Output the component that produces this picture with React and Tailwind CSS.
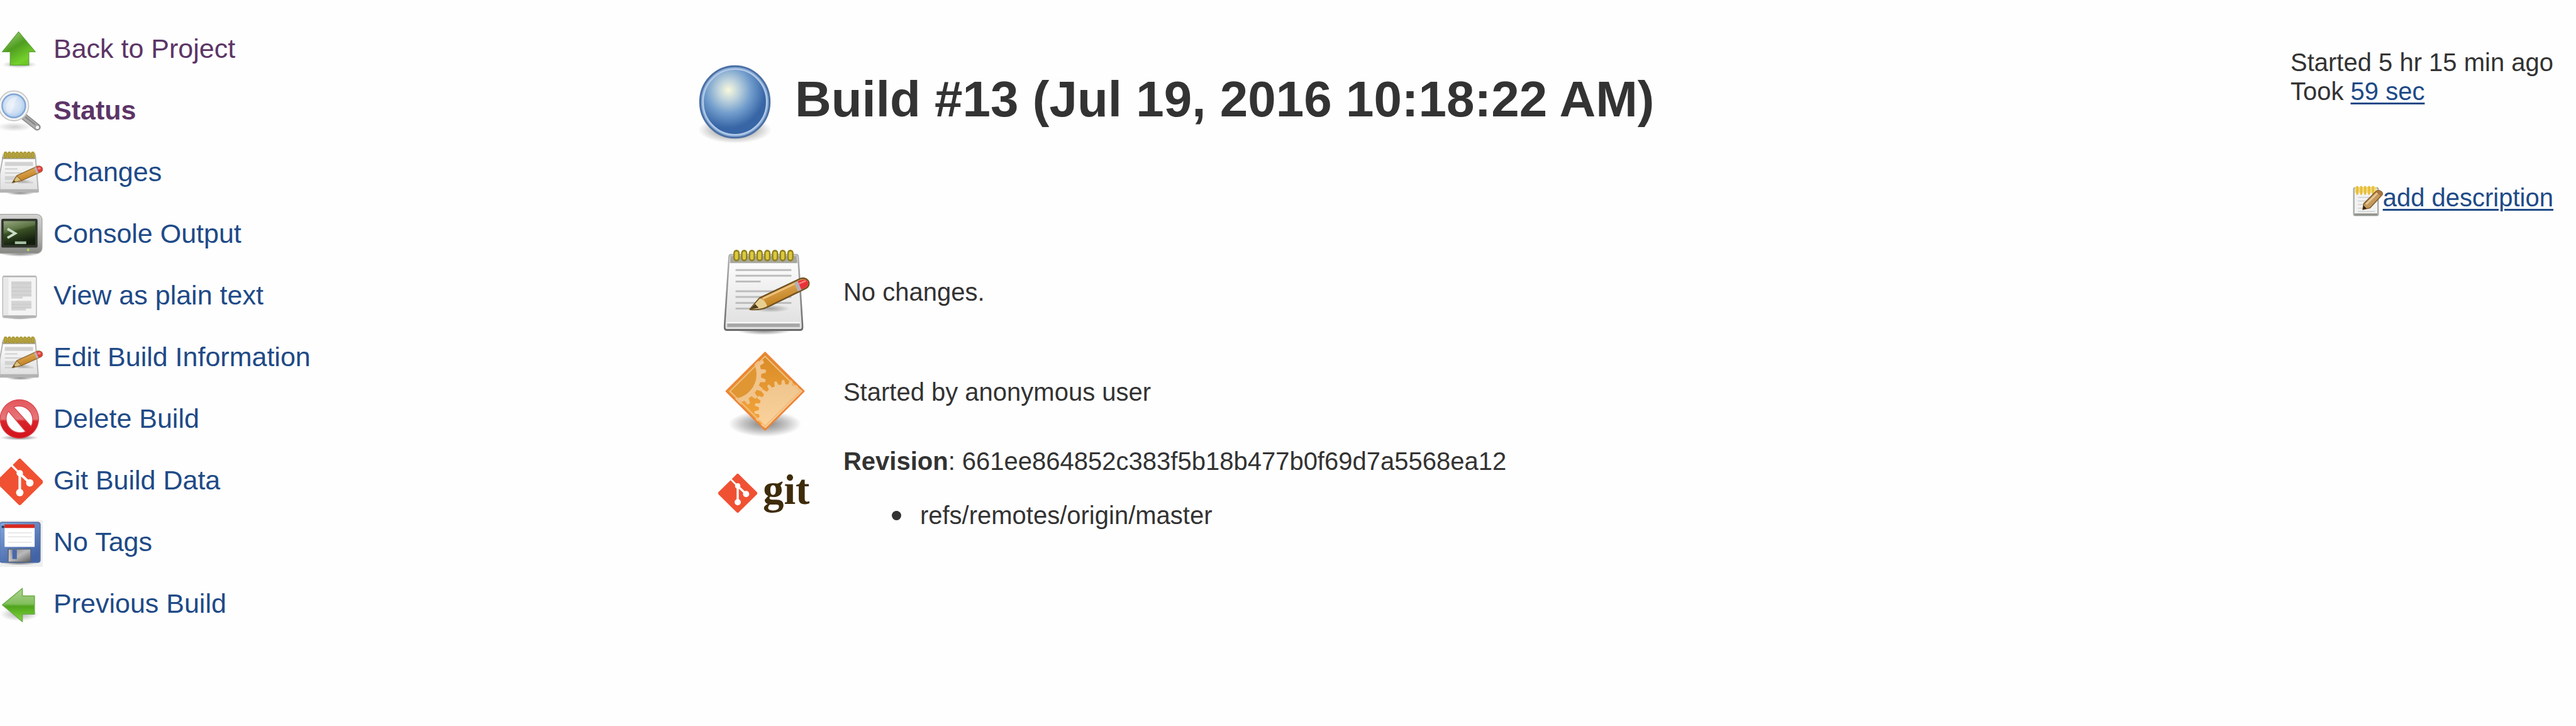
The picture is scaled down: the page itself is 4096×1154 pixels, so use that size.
const ICON = "block h-[74px] w-[68px] shrink-0";

function SharedPaint() {
  return (
    <svg className="absolute size-0" aria-hidden="true">
      <defs>
        <linearGradient id="arrowUp" x1="0" y1="0" x2="0.6" y2="1">
          <stop offset="0" stopColor="#8cc861" />
          <stop offset="0.25" stopColor="#7fbb55" />
          <stop offset="0.5" stopColor="#4f9d20" />
          <stop offset="0.9" stopColor="#74d02b" />
          <stop offset="1" stopColor="#6cc726" />
        </linearGradient>
        <linearGradient id="arrowLeft" x1="0" y1="0" x2="0" y2="1">
          <stop offset="0" stopColor="#aed495" />
          <stop offset="0.46" stopColor="#83bf5c" />
          <stop offset="0.54" stopColor="#4fa41c" />
          <stop offset="1" stopColor="#83d83c" />
        </linearGradient>
        <linearGradient id="paper" x1="0" y1="0" x2="0" y2="1">
          <stop offset="0" stopColor="#ffffff" />
          <stop offset="1" stopColor="#dedede" />
        </linearGradient>
        <linearGradient id="padEdge" x1="0" y1="0" x2="0" y2="1">
          <stop offset="0" stopColor="#b4b4b4" />
          <stop offset="1" stopColor="#6a6a6a" />
        </linearGradient>
        <linearGradient id="wood" x1="0" y1="0" x2="0.5" y2="1">
          <stop offset="0.2" stopColor="#e6b468" />
          <stop offset="0.8" stopColor="#c58424" />
        </linearGradient>
        <radialGradient id="lens" cx="0.45" cy="0.45" r="0.6">
          <stop offset="0" stopColor="#e6eefa" />
          <stop offset="0.6" stopColor="#cfdff3" />
          <stop offset="1" stopColor="#a3c3e8" />
        </radialGradient>
        <linearGradient id="bezel" x1="0" y1="0" x2="0" y2="1">
          <stop offset="0" stopColor="#d4d4d2" />
          <stop offset="0.7" stopColor="#a5a6a1" />
          <stop offset="1" stopColor="#858682" />
        </linearGradient>
        <linearGradient id="screen" x1="0" y1="0" x2="0.35" y2="1">
          <stop offset="0" stopColor="#99a983" />
          <stop offset="0.42" stopColor="#5c7443" />
          <stop offset="0.5" stopColor="#3b5226" />
          <stop offset="1" stopColor="#121d0c" />
        </linearGradient>
        <linearGradient id="forbid" x1="0" y1="0" x2="0" y2="1">
          <stop offset="0" stopColor="#e4575c" />
          <stop offset="0.5" stopColor="#e6777b" />
          <stop offset="0.56" stopColor="#d8232a" />
          <stop offset="1" stopColor="#d3131b" />
        </linearGradient>
        <linearGradient id="floppy" x1="0" y1="0" x2="0.6" y2="1">
          <stop offset="0" stopColor="#84a7dc" />
          <stop offset="1" stopColor="#4263a5" />
        </linearGradient>
        <linearGradient id="shutter" x1="0" y1="0" x2="1" y2="1">
          <stop offset="0" stopColor="#8f8f8f" />
          <stop offset="0.5" stopColor="#b9b9b9" />
          <stop offset="1" stopColor="#5c5c5c" />
        </linearGradient>
        <radialGradient id="orb" cx="0.4" cy="0.32" r="0.58">
          <stop offset="0" stopColor="#f9f9dc" />
          <stop offset="0.28" stopColor="#bdd2dc" />
          <stop offset="0.62" stopColor="#709ccc" />
          <stop offset="1" stopColor="#3765a5" />
        </radialGradient>
        <radialGradient id="shade">
          <stop offset="0" stopColor="#000000" stopOpacity="0.5" />
          <stop offset="0.6" stopColor="#000000" stopOpacity="0.22" />
          <stop offset="1" stopColor="#000000" stopOpacity="0" />
        </radialGradient>
        <linearGradient id="amber" x1="0" y1="0" x2="0" y2="1">
          <stop offset="0" stopColor="#d88a28" />
          <stop offset="1" stopColor="#f6a83c" />
        </linearGradient>
        <linearGradient id="cream" x1="0" y1="0" x2="0" y2="1">
          <stop offset="0" stopColor="#eec48c" />
          <stop offset="1" stopColor="#ffd6a0" />
        </linearGradient>
      </defs>
    </svg>
  );
}

function UpArrow() {
  return (
    <svg viewBox="0 0 264 288" className={ICON} aria-hidden="true">
      <ellipse cx="120" cy="232" rx="108" ry="22" fill="url(#shade)" opacity="0.6" />
      <path d="M115 30 218 153H178V236H63V153H14Z" fill="url(#arrowUp)" stroke="#5da335" strokeWidth="5" strokeLinejoin="round" />
    </svg>
  );
}

function LeftArrow() {
  return (
    <svg viewBox="0 0 264 288" className={ICON} aria-hidden="true">
      <ellipse cx="120" cy="200" rx="118" ry="42" fill="url(#shade)" opacity="0.6" />
      <path d="M14 142 138 40V87H213V199H138V246Z" fill="url(#arrowLeft)" stroke="#6cae48" strokeWidth="6" strokeLinejoin="round" />
    </svg>
  );
}

function Magnifier() {
  return (
    <svg viewBox="0 0 264 288" className={ICON} aria-hidden="true">
      <ellipse cx="90" cy="236" rx="110" ry="28" fill="url(#shade)" opacity="0.35" />
      <path d="M150 174 230 238" stroke="#7d7d7d" strokeWidth="42" strokeLinecap="round" />
      <path d="M150 174 229 238" stroke="#adadad" strokeWidth="32" strokeLinecap="round" />
      <path d="M156 174 218 223" stroke="#888888" strokeWidth="10" />
      <circle cx="231" cy="239" r="13" fill="#f2f2f2" stroke="#9a9a9a" strokeWidth="5" />
      <circle cx="85" cy="106" r="92" fill="#f3f3f3" stroke="#c2c2c2" strokeWidth="6" />
      <circle cx="85" cy="106" r="72" fill="url(#lens)" stroke="#7ea5d6" strokeWidth="9" />
      <path d="M38 130C34 74 74 46 110 54 84 70 96 130 60 154 48 150 40 142 38 130Z" fill="#ffffff" opacity="0.35" />
    </svg>
  );
}

function SmallPad() {
  return (
    <svg viewBox="0 0 264 288" className={ICON} aria-hidden="true">
      <ellipse cx="125" cy="262" rx="90" ry="16" fill="url(#shade)" />
      <path d="M20 28H218L237 255H-2V150Z" fill="url(#paper)" stroke="#b0b0b0" strokeWidth="7" strokeLinejoin="round" />
      <path d="M-2 240H236V262H-2Z" fill="#b3b3b3" />
      <path d="M12 40H220V54H12Z" fill="#a8a698" />
      <path d="M22 14H216V48H22Z" fill="#b0a14a" />
      <path d="M34 8V48M58 8V48M82 8V48M106 8V48M130 8V48M154 8V48M178 8V48M202 8V48" stroke="#a8952e" strokeWidth="15" />
      <path d="M34 14V40M58 14V40M82 14V40M106 14V40M130 14V40M154 14V40M178 14V40M202 14V40" stroke="#bfad45" strokeWidth="6" />
      <path d="M30 78H204M30 90H204M30 166H170M30 178H100" stroke="#d2d2d2" strokeWidth="12" />
      <path d="M30 115H108M30 140H150M30 200H90M110 200H205" stroke="#cfcfcf" strokeWidth="8" />
      <ellipse cx="140" cy="192" rx="60" ry="12" fill="url(#shade)" opacity="0.5" />
      <path d="M76 200 104 156 232 98C250 92 266 106 262 124L256 132 132 188Z" fill="url(#wood)" stroke="#8d6a35" strokeWidth="5" strokeLinejoin="round" />
      <path d="M76 200 104 158 132 186Z" fill="#dcc27e" stroke="#8d6a35" strokeWidth="4" />
      <path d="M76 200 86 184 96 194Z" fill="#5f4a20" />
      <path d="M212 108 224 102 238 138 226 144Z" fill="#b9b3b8" />
      <path d="M224 102C246 92 266 104 262 122L256 130 238 138Z" fill="#e23c3c" />
      <ellipse cx="242" cy="112" rx="10" ry="8" fill="#f48080" />
    </svg>
  );
}

function Terminal() {
  return (
    <svg viewBox="0 0 264 288" className={ICON} aria-hidden="true">
      <ellipse cx="125" cy="258" rx="120" ry="18" fill="url(#shade)" />
      <rect x="-24" y="14" width="284" height="242" rx="34" fill="url(#bezel)" stroke="#a3a3a1" strokeWidth="5" />
      <rect x="8" y="42" width="224" height="178" rx="10" fill="#30352c" />
      <rect x="22" y="56" width="196" height="148" fill="url(#screen)" />
      <path d="M46 104 94 132 46 160" fill="none" stroke="#c9dcc8" strokeWidth="15" />
      <path d="M92 190H162" stroke="#a5bfa2" strokeWidth="17" />
      <circle cx="174" cy="234" r="8" fill="#a8d860" />
    </svg>
  );
}

function PlainDocument() {
  return (
    <svg viewBox="0 0 264 288" className={ICON} aria-hidden="true">
      <ellipse cx="120" cy="272" rx="95" ry="12" fill="url(#shade)" />
      <rect x="17" y="15" width="208" height="256" rx="10" fill="#f4f4f4" stroke="#b5b5b5" strokeWidth="6" />
      <path d="M22 18H220" stroke="#b9b9b9" strokeWidth="8" />
      <path d="M24 26H52V262H24Z" fill="#e8e8e8" />
      <path d="M22 264H220" stroke="#b2b2b2" strokeWidth="12" />
      <path d="M70 48H194V142H140V154H70ZM70 168H194V216H160V228H70Z" fill="#d4d4d4" />
      <path d="M70 60H194M70 84H194M70 108H194M70 132H194M70 190H194M70 210H194" stroke="#cacaca" strokeWidth="5" />
    </svg>
  );
}

function Forbidden() {
  return (
    <svg viewBox="0 0 264 288" className={ICON} aria-hidden="true">
      <ellipse cx="120" cy="252" rx="120" ry="16" fill="url(#shade)" />
      <path
        fillRule="evenodd"
        d="M120 17A119 119 0 1 1 119 17ZM84 62A86 86 0 0 1 192 182ZM52 88A86 86 0 0 0 158 214Z"
        fill="url(#forbid)"
        stroke="#d9454b"
        strokeWidth="5"
        strokeLinejoin="round"
      />
    </svg>
  );
}

function GitMark() {
  return (
    <>
      <path d="M122 -2Q126 -2 130 4L264 136Q272 144 264 152L130 284Q122 292 114 284L-20 152Q-28 144 -20 136L114 4Q118 -2 122 -2Z" fill="#f05133" />
      <path d="M72 42 122 92" stroke="#ffffff" strokeWidth="13" />
      <path d="M122 92 184 150M122 96V210" stroke="#ffffff" strokeWidth="16" />
      <circle cx="122" cy="90" r="20" fill="#ffffff" />
      <circle cx="184" cy="150" r="23" fill="#ffffff" />
      <circle cx="122" cy="210" r="23" fill="#ffffff" />
    </>
  );
}

function GitIcon() {
  return (
    <svg viewBox="0 0 264 288" className={ICON} aria-hidden="true">
      <GitMark />
    </svg>
  );
}

function Floppy() {
  return (
    <svg viewBox="0 0 264 288" className={ICON} aria-hidden="true">
      <rect x="0" y="0" width="264" height="288" fill="#eeeeee" />
      <ellipse cx="120" cy="264" rx="110" ry="14" fill="url(#shade)" />
      <rect x="-2" y="13" width="250" height="248" rx="14" fill="url(#floppy)" stroke="#4f6da6" strokeWidth="6" />
      <rect x="10" y="34" width="16" height="14" fill="#2b3c5e" />
      <path d="M28 46H214V164H28Z" fill="#ffffff" />
      <path d="M28 25H214V48H28Z" fill="#d8291f" />
      <path d="M48 78H196M48 102H196M48 136H196" stroke="#e2e2e2" strokeWidth="6" />
      <path d="M50 178H190V258H50Z" fill="url(#shutter)" stroke="#55617a" strokeWidth="5" />
      <path d="M60 182V254" stroke="#c9c9c9" strokeWidth="8" />
      <path d="M76 182H104V240H76Z" fill="#4868a8" />
    </svg>
  );
}

function BlueOrb() {
  return (
    <svg viewBox="0 0 150 167" className="mt-[27px] block h-[128px] w-[115px] shrink-0" role="img" aria-label="Success">
      <ellipse cx="75" cy="135" rx="76" ry="28" fill="url(#shade)" />
      <ellipse cx="75" cy="77" rx="72" ry="74" fill="#89acd6" stroke="#4c70a6" strokeWidth="4" />
      <ellipse cx="75" cy="77" rx="66" ry="68" fill="url(#orb)" stroke="#b4cbe8" strokeWidth="3" />
    </svg>
  );
}

const RINGS = [228, 276, 324, 372, 420, 468, 516, 564];

function LargePad() {
  return (
    <svg viewBox="114 33 576 524" preserveAspectRatio="none" className="block h-[159px] w-[147px]" aria-hidden="true">
      <ellipse cx="400" cy="498" rx="170" ry="24" fill="url(#shade)" />
      <path d="M192 102H602Q611 102 612 112L639 470V484Q639 496 627 496H166Q154 496 154 484V470L182 112Q183 102 192 102Z" fill="url(#paper)" stroke="url(#padEdge)" strokeWidth="10" />
      <path d="M190 108H604L607 146H187Z" fill="#a7a79e" />
      <path d="M168 458H624" stroke="#f6f6f6" strokeWidth="8" />
      <path d="M170 471H622" stroke="#a6a6a6" strokeWidth="18" />
      <path d="M222 182H570M222 212H570M222 242H378M222 293H570M222 323H570M222 354H570M222 384H400" stroke="#bdbdbd" strokeWidth="10" />
      {RINGS.map((x) => (
        <rect key={x} x={x - 15} y="80" width="30" height="52" rx="14" fill="#dcc93c" stroke="#91801a" strokeWidth="9" />
      ))}
      <ellipse cx="440" cy="384" rx="120" ry="20" fill="url(#shade)" opacity="0.6" />
      <path d="M312 388 372 328 624 228C650 220 678 230 680 252 680 268 668 276 650 282L420 376C390 388 350 390 312 388Z" fill="url(#wood)" stroke="#6f5224" strokeWidth="8" strokeLinejoin="round" />
      <path d="M392 332 600 250" stroke="#eec179" strokeWidth="10" />
      <path d="M316 386 372 332C392 332 412 348 418 372 390 386 350 388 316 386Z" fill="#e6cf91" />
      <path d="M312 388 344 360 366 380Z" fill="#4d3c1c" />
      <path d="M588 250 612 240 636 284 610 294Z" fill="#b4b1b6" />
      <path d="M610 241C646 226 672 232 675 250 676 266 664 272 632 284Z" fill="#e83238" />
      <path d="M620 252 656 240" stroke="#ff7d7d" strokeWidth="9" strokeLinecap="round" />
    </svg>
  );
}

const FLATTEN = 0.843;

function gearPoints(cx, cy, inner, outer, teeth, turn) {
  const points = [];
  for (let i = 0; i < teeth; i += 1) {
    [
      [0, inner],
      [0.28, inner],
      [0.42, outer],
      [0.72, outer],
      [0.86, inner],
    ].forEach(([step, radius]) => {
      const angle = ((i + step) / teeth) * Math.PI * 2 + turn;
      const x = cx + radius * Math.cos(angle);
      const y = cy + radius * FLATTEN * Math.sin(angle);
      points.push(`${x.toFixed(1)},${y.toFixed(1)}`);
    });
  }
  return points.join(" ");
}

function Gears() {
  return (
    <svg viewBox="114 557 576 524" preserveAspectRatio="none" className="block h-[159px] w-[147px]" aria-hidden="true">
      <clipPath id="diamond">
        <path d="M406 616 646 817 406 1018 166 817Z" />
      </clipPath>
      <ellipse cx="405" cy="988" rx="228" ry="68" fill="url(#shade)" />
      <g clipPath="url(#diamond)">
        <rect x="160" y="610" width="492" height="414" fill="url(#amber)" />
        <polygon points={gearPoints(200, 728, 182, 212, 22, 0.03)} fill="#f1c48c" />
        <ellipse cx="200" cy="728" rx="153" ry="129" fill="#e09632" />
        <polygon points={gearPoints(530, 918, 163, 190, 24, 0.05)} fill="url(#cream)" />
      </g>
      <path d="M406 634 625 817 406 1000 187 817Z" fill="none" stroke="#f2bd7d" strokeWidth="7" />
      <path d="M406 615 647 817 406 1019 165 817Z" fill="none" stroke="#ee8436" strokeWidth="10" strokeLinejoin="round" />
    </svg>
  );
}

function GitLogo() {
  return (
    <div className="flex w-[147px] items-center gap-[9px]">
      <svg viewBox="-22 0 288 288" className="block size-[62px] shrink-0" aria-hidden="true">
        <GitMark />
      </svg>
      <span className="pb-3 font-['Liberation_Serif',serif] text-[67px] leading-[76px] font-bold text-[#3e2c0b]">git</span>
    </div>
  );
}

function MiniPad() {
  return (
    <svg viewBox="45 48 183 188" className="mt-1 block h-[49px] w-[48px] shrink-0" aria-hidden="true">
      <rect x="51" y="62" width="148" height="168" rx="8" fill="#f2f2f2" stroke="#a9aba6" strokeWidth="9" />
      <path d="M56 224H194" stroke="#90938c" strokeWidth="12" />
      <path d="M76 120H150M76 142H130M76 164H120M76 186H110M76 206H180" stroke="#cfd0d2" strokeWidth="6" />
      <path d="M58 74H190" stroke="#f3da7c" strokeWidth="36" />
      <path d="M72 56V98M96 56V98M120 56V98M144 56V98M168 56V98" stroke="#e6bd3a" strokeWidth="13" strokeLinecap="round" />
      <path d="M106 194 112 158 188 82C204 72 228 84 226 102L150 184Z" fill="#c49a5c" stroke="#81592a" strokeWidth="6" strokeLinejoin="round" />
      <path d="M126 162 196 92" stroke="#e8c898" strokeWidth="10" />
      <path d="M188 82C204 72 228 84 226 102L214 112 186 86Z" fill="#a9763f" />
      <path d="M106 194 110 170 130 188Z" fill="#33200f" />
    </svg>
  );
}

const TASKS = [
  { label: "Back to Project", Icon: UpArrow, tone: "text-[#5c3566]" },
  { label: "Status", Icon: Magnifier, tone: "font-bold text-[#5c3566]" },
  { label: "Changes", Icon: SmallPad, tone: "text-[#204a87]" },
  { label: "Console Output", Icon: Terminal, tone: "text-[#204a87]" },
  { label: "View as plain text", Icon: PlainDocument, tone: "text-[#204a87]" },
  { label: "Edit Build Information", Icon: SmallPad, tone: "text-[#204a87]" },
  { label: "Delete Build", Icon: Forbidden, tone: "text-[#204a87]" },
  { label: "Git Build Data", Icon: GitIcon, tone: "text-[#204a87]" },
  { label: "No Tags", Icon: Floppy, tone: "text-[#204a87]" },
  { label: "Previous Build", Icon: LeftArrow, tone: "text-[#204a87]" },
];

const LINK = "text-[#204a87] underline decoration-[3px] underline-offset-[4px]";

export default function App() {
  return (
    <div className="flex min-h-screen bg-[#fefefe] font-['Liberation_Sans',Arial,sans-serif] text-[40px] leading-[46px] text-[#333333]">
      <SharedPaint />
      <nav className="w-[27%] shrink-0 pt-[43px]" aria-label="Build tasks">
        <ul className="flex flex-col gap-6">
          {TASKS.map(({ label, Icon, tone }) => (
            <li key={label}>
              <a href="#" className={`flex items-start gap-[17px] text-[43px] leading-[68px] ${tone}`}>
                <Icon />
                {label}
              </a>
            </li>
          ))}
        </ul>
      </nav>

      <main className="min-w-0 flex-1 pt-[76px] pr-9">
        <header className="flex items-start pl-[5px]">
          <BlueOrb />
          <h1 className="mt-9 ml-[38px] text-[80px] leading-[92px] font-bold">
            Build #13 (Jul 19, 2016 10:18:22 AM)
          </h1>
          <div className="ml-auto flex shrink-0 flex-col gap-[123px]">
            <div>
              <p>Started 5 hr 15 min ago</p>
              <p>
                Took <a href="#" className={LINK}>59 sec</a>
              </p>
            </div>
            <div className="flex items-start justify-end">
              <MiniPad />
              <a href="#" className={LINK}>add description</a>
            </div>
          </div>
        </header>

        <table className="mt-10 ml-9">
          <tbody>
            <tr>
              <td><LargePad /></td>
              <td className="pl-[52px]">No changes.</td>
            </tr>
            <tr>
              <td><Gears /></td>
              <td className="pl-[52px]">Started by anonymous user</td>
            </tr>
            <tr>
              <td><GitLogo /></td>
              <td className="pt-2 pb-6 pl-[52px]">
                <p><b>Revision</b>: 661ee864852c383f5b18b477b0f69d7a5568ea12</p>
                <ul className="mt-10 pl-[77px]">
                  <li className="flex items-center gap-[30px] before:size-[15px] before:rounded-full before:bg-[#333333]">
                    refs/remotes/origin/master
                  </li>
                </ul>
              </td>
            </tr>
          </tbody>
        </table>
      </main>
    </div>
  );
}
